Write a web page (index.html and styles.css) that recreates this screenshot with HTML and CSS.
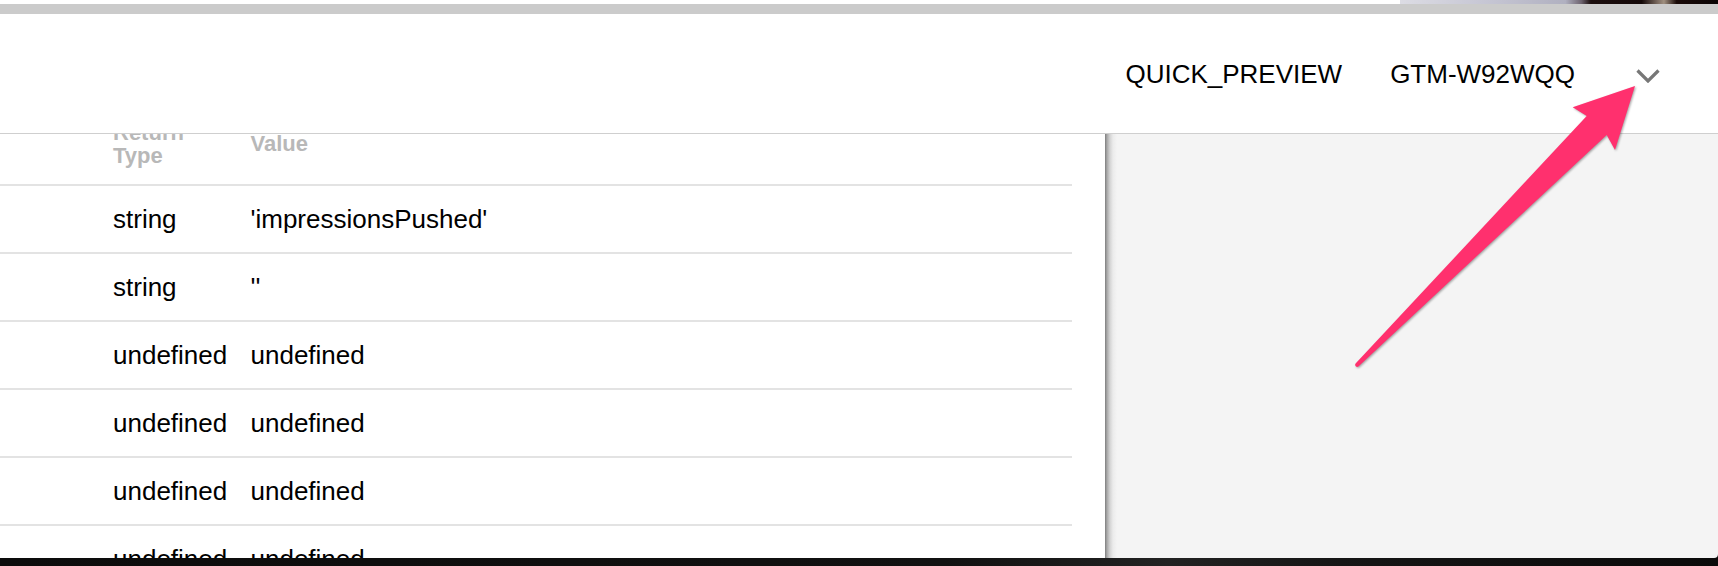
FILE: index.html
```html
<!DOCTYPE html>
<html>
<head>
<meta charset="utf-8">
<link rel="stylesheet" href="styles.css">
</head>
<body>
<div class="topstrip"><div class="topimg"></div></div>
<div class="graybar"></div>
<header class="appbar">
  <span class="label">QUICK_PREVIEW</span>
  <span class="label">GTM-W92WQQ</span>
  <span class="chev"><svg width="24" height="14" viewBox="0 0 24 14"><polyline points="1.5,1.5 12,12 22.5,1.5" fill="none" stroke="#777" stroke-width="3.2"/></svg></span>
</header>
<main class="content">
  <section class="left">
    <div class="table">
      <div class="row head"><div class="c1">Return<br>Type</div><div class="c2">Value</div></div>
      <div class="row"><div class="c1">string</div><div class="c2">'impressionsPushed'</div></div>
      <div class="row"><div class="c1">string</div><div class="c2">''</div></div>
      <div class="row"><div class="c1">undefined</div><div class="c2">undefined</div></div>
      <div class="row"><div class="c1">undefined</div><div class="c2">undefined</div></div>
      <div class="row"><div class="c1">undefined</div><div class="c2">undefined</div></div>
      <div class="row"><div class="c1">undefined</div><div class="c2">undefined</div></div>
    </div>
  </section>
  <section class="right"></section>
</main>
<div class="bottombar"></div>
<svg class="arrow" width="1718" height="566" viewBox="0 0 1718 566">
  <path d="M1355.6 363.6 L1586.7 116 L1572.7 107.3 L1635 86 L1615 150 L1606.7 135 L1358.4 366.4 A2 2 0 0 1 1355.6 363.6 Z" fill="#ff306e"/>
</svg>
</body>
</html>
```
FILE: styles.css
```css
* { box-sizing: border-box; margin: 0; padding: 0; }
html, body { width: 1718px; height: 566px; overflow: hidden; }
body {
  font-family: "Liberation Sans", Arial, sans-serif;
  background: #0e0e0e;
  display: flex;
  flex-direction: column;
  position: relative;
}
.topstrip { height: 4px; flex: none; background: #fff; display: flex; justify-content: flex-end; }
.topimg {
  width: 318px; height: 4px;
  background: linear-gradient(to right, #dcdce4 0%, #c4c4d2 30%, #b0b0c0 52%, #6e6470 57%, #1c0e0e 60%, #140808 76%, #7a6a60 81%, #a09080 83%, #1a0a08 87%, #0a0404 100%);
}
.graybar { height: 10px; flex: none; background: #cbcbcb; }
.appbar {
  height: 120px; flex: none;
  background: #fff;
  border-bottom: 1px solid #cfcfcf;
  display: flex; align-items: center; justify-content: flex-end;
  padding-right: 58px;
}
.label { font-size: 26px; line-height: 30px; color: #000; }
.label + .label { margin-left: 48px; }
.chev { display: flex; margin-left: 61px; margin-top: 4px; }
.content { height: 424px; flex: none; display: flex; }
.left { width: 1105px; flex: none; background: #fff; overflow: hidden; }
.table { width: 1072px; margin-top: -13.5px; }
.row {
  display: flex; align-items: center;
  height: 68px;
  border-bottom: 2px solid #e3e3e3;
  padding-left: 113px;
  font-size: 26px;
  color: #000;
}
.row.head {
  height: 65.5px;
  padding-bottom: 17.5px;
  font-size: 22px;
  line-height: 23px;
  font-weight: bold;
  color: #b8b8b8;
}
.c1 { width: 137.5px; flex: none; }
.right {
  flex: 1;
  background: linear-gradient(to right, #7e7e7e 0, #a8a8a8 2px, #d4d4d4 5px, #ebebeb 8px, #f4f4f4 12px);
  border-bottom-right-radius: 4px;
}
.bottombar {
  height: 8px; flex: none;
  background: linear-gradient(to right, #0c0c0c 0%, #111 55%, #222 68%, #151515 78%, #0a0a0a 100%);
}
.arrow {
  position: absolute; left: 0; top: 0;
  pointer-events: none;
  filter: drop-shadow(1px 1.5px 1px rgba(0,0,0,0.35));
}
```
